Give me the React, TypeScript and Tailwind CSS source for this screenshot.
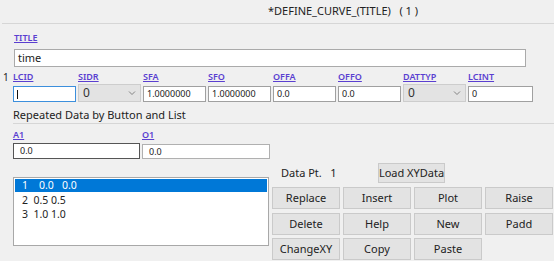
import React from "react";

const font = { fontFamily: '"Noto Sans", "Open Sans", sans-serif' };

function Lbl({ children, w = "w-[65px]" }: { children: React.ReactNode; w?: string }) {
  return (
    <div className={`${w} shrink-0 text-[9px] leading-[12px] font-semibold text-[#5a3fd0] underline`}>{children}</div>
  );
}

function Inp({ v, cls = "" }: { v: string; cls?: string }) {
  return (
    <div className={`h-[16px] w-[63px] mr-[2px] mt-[2px] shrink-0 bg-white border border-[#a0a0a0] text-[9px] leading-[14px] pl-[3px] text-[#222] ${cls}`}>{v}</div>
  );
}

function Sel({ v }: { v: string }) {
  return (
    <div className="h-[18px] w-[63px] mr-[2px] shrink-0 bg-[#e3e3e3] border border-[#cdcdcd] flex items-center justify-between pl-[4px] pr-[4px] text-[12px] text-[#333]">
      <span>{v}</span>
      <svg width="8" height="6" viewBox="0 0 8 6"><path d="M1 1.5 L4 4.5 L7 1.5" stroke="#777" strokeWidth="0.9" fill="none" /></svg>
    </div>
  );
}

function Btn({ t }: { t: string }) {
  return (
    <div className="h-[22px] w-[68px] shrink-0 bg-[#e3e3e3] border border-[#cacaca] flex items-center justify-center text-[11px] text-[#222] whitespace-nowrap">{t}</div>
  );
}

export default function App() {
  return (
    <div className="w-[554px] h-[261px] bg-[#f0f0f0] overflow-hidden text-[#222]" style={font}>
      <div className="h-[24px] ml-[2px] border-b border-[#d6d6d6] flex items-center pl-[266px] text-[11px] text-[#222]">
        *DEFINE_CURVE_(TITLE)&nbsp;&nbsp;&nbsp;( 1 )
      </div>
      <div className="pl-[14px] mt-[8px] h-[12px]">
        <Lbl>TITLE</Lbl>
      </div>
      <div className="ml-[14px] mt-[5px] w-[512px] h-[18px] bg-white border border-[#aaaaaa] text-[11px] leading-[16px] pl-[3px]">time</div>
      <div className="flex mt-[4px] h-[12px]">
        <div className="w-[13px] pl-[3px] text-[10px] leading-[12px]">1</div>
        <Lbl>LCID</Lbl>
        <Lbl>SIDR</Lbl>
        <Lbl>SFA</Lbl>
        <Lbl>SFO</Lbl>
        <Lbl>OFFA</Lbl>
        <Lbl>OFFO</Lbl>
        <Lbl>DATTYP</Lbl>
        <Lbl>LCINT</Lbl>
      </div>
      <div className="flex ml-[13px] mt-[1px] h-[18px]">
        <div className="h-[16px] w-[63px] mr-[2px] mt-[2px] shrink-0 bg-white border border-[#3c8fdc] flex items-center pl-[3px]">
          <div className="w-[1px] h-[9px] bg-[#111]" />
        </div>
        <Sel v="0" />
        <Inp v="1.0000000" />
        <Inp v="1.0000000" />
        <Inp v="0.0" />
        <Inp v="0.0" />
        <Sel v="0" />
        <Inp v="0" cls="w-[65px]" />
      </div>
      <div className="ml-[13px] mt-[6px] h-[14px] text-[11px] leading-[14px] text-[#222]">Repeated Data by Button and List</div>
      <div className="ml-[13px] mt-[1px] border-b border-[#d6d6d6]" />
      <div className="flex ml-[13px] mt-[5px] h-[12px]">
        <Lbl w="w-[129px]">A1</Lbl>
        <Lbl>O1</Lbl>
      </div>
      <div className="flex ml-[13px] mt-[2px]">
        <div className="h-[16px] w-[127px] mr-[2px] bg-white border border-[#555] text-[9px] leading-[14px] pl-[6px]">0.0</div>
        <div className="h-[15px] w-[128px] mt-[1px] bg-white border border-[#b0b0b0] text-[9px] leading-[13px] pl-[6px]">0.0</div>
      </div>
      <div className="flex ml-[13px] mt-[4px]">
        <div className="w-[256px] h-[69px] mt-[14px] mr-[3px] bg-white border border-[#a8a8a8] text-[10.5px] p-[1px]">
          <div className="h-[13px] leading-[13px] bg-[#0078d7] text-white pl-[7px] whitespace-pre">1    0.0   0.0</div>
          <div className="h-[14px] leading-[14px] pl-[7px] mt-[1px] whitespace-pre">2  0.5 0.5</div>
          <div className="h-[14px] leading-[14px] pl-[7px] whitespace-pre">3  1.0 1.0</div>
        </div>
        <div className="flex flex-col">
          <div className="flex items-center h-[20px]">
            <div className="w-[106px] pl-[9px] text-[11px] whitespace-pre">Data Pt.   1</div>
            <div className="h-[20px] w-[67px] bg-[#e3e3e3] border border-[#cacaca] flex items-center justify-center text-[11px] whitespace-nowrap">Load XYData</div>
          </div>
          <div className="flex gap-[3px] mt-[4px]">
            <Btn t="Replace" /><Btn t="Insert" /><Btn t="Plot" /><Btn t="Raise" />
          </div>
          <div className="flex gap-[3px] mt-[4px]">
            <Btn t="Delete" /><Btn t="Help" /><Btn t="New" /><Btn t="Padd" />
          </div>
          <div className="flex gap-[3px] mt-[3px]">
            <Btn t="ChangeXY" /><Btn t="Copy" /><Btn t="Paste" />
          </div>
        </div>
      </div>
    </div>
  );
}
